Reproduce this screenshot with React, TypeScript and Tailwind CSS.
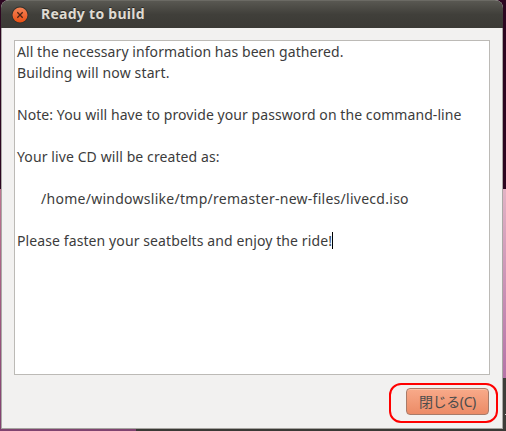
import { clsx } from 'clsx'

interface Line {
  text: string
  className?: string
}

const lines: Line[] = [
  { text: 'All the necessary information has been gathered.', className: 'tracking-[0.07px]' },
  { text: 'Building will now start.', className: 'tracking-[0.14px]' },
  { text: '' },
  { text: 'Note: You will have to provide your password on the command-line', className: 'tracking-[0.07px]' },
  { text: '' },
  { text: 'Your live CD will be created as:', className: 'tracking-[0.1px]' },
  { text: '' },
  { text: '/home/windowslike/tmp/remaster-new-files/livecd.iso', className: 'pl-6 tracking-[0.27px]' },
  { text: '' },
  { text: 'Please fasten your seatbelts and enjoy the ride!', className: 'tracking-[0.1px]' },
]

function CloseIcon() {
  return (
    <svg width="18" height="18" viewBox="0 0 18 18" className="shrink-0">
      <defs>
        <linearGradient id="close" x1="0" y1="0" x2="0" y2="1">
          <stop offset="0" stopColor="#f58253" />
          <stop offset="0.5" stopColor="#f06a38" />
          <stop offset="1" stopColor="#e94f12" />
        </linearGradient>
      </defs>
      <circle cx="9" cy="9" r="8.4" fill="#33322d" />
      <circle cx="9" cy="9" r="7.5" fill="url(#close)" />
      <path d="M6.3 6.3l5.4 5.4M11.7 6.3l-5.4 5.4" stroke="#4c2415" strokeWidth="1.3" />
    </svg>
  )
}

function TitleBar({ title }: { title: string }) {
  return (
    <div className="flex h-7 shrink-0 items-center gap-3 border-t border-[#6b6a64] bg-linear-to-b from-[#595852] via-[#403f3a] to-[#3b3a35] pl-[10px]">
      <CloseIcon />
      <span className="pb-0.5 text-sm font-bold leading-none tracking-[0.27px] text-[#dfdbd2] [text-shadow:0_-1px_0_#2a2925]">
        {title}
      </span>
    </div>
  )
}

function MessageView() {
  return (
    <div className="h-[335px] border border-[#bcbab6] bg-white pl-0.5 text-sm leading-[21px] text-[#3c3c3c]">
      {lines.map((line, i) => (
        <div key={i} className={clsx('flex h-[21px] items-center whitespace-nowrap', line.className)}>
          <span>{line.text}</span>
          {i === lines.length - 1 && <span className="h-[17px] w-px bg-black" />}
        </div>
      ))}
    </div>
  )
}

function Dialog() {
  return (
    <div className="flex h-[429px] w-[502px] flex-col overflow-hidden rounded-t-lg border-b border-[#a5a39f] bg-[#f2f1f0]">
      <TitleBar title="Ready to build" />
      <div className="flex flex-1 flex-col border-x border-[#aaa8a5] px-3 pt-3">
        <MessageView />
        {/* Highlighted action */}
        <div className="-mr-2 mt-2 flex h-10 w-[109px] items-start self-end rounded-xl border-2 border-[#ff0000] pl-[15px] pt-[3px]">
          <button className="h-[27px] w-[83px] whitespace-nowrap rounded border border-[#a87b69] bg-linear-to-b from-[#f8aa8a] to-[#ec8b66] text-sm leading-none tracking-[-0.4px] text-[#4c4c4c] shadow-[inset_0_1px_0_#fbc1a8]">
            閉じる(C)
          </button>
        </div>
      </div>
    </div>
  )
}

export default function App() {
  return (
    <div className="flex h-[431px] w-[506px] flex-col overflow-hidden bg-[#2c0620] font-['Noto_Sans','Noto_Sans_CJK_JP',sans-serif]">
      <div className="flex h-[429px]">
        <div className="flex w-px flex-col">
          <div className="h-[189px] bg-[#2c0620]" />
          <div className="flex-1 bg-linear-to-b from-[#bd7590] to-[#80406f]" />
        </div>
        <Dialog />
        <div className="flex w-[3px] flex-col">
          <div className="h-[189px] bg-[#2c0620]" />
          <div className="h-[189px] bg-linear-to-b from-[#e3b2c5] to-[#b574a8]" />
          <div className="flex flex-1 flex-col items-end bg-[#3e3d39] pt-9">
            <div className="size-px bg-[#d8d8d6]" />
          </div>
        </div>
      </div>
      <div className="flex h-0.5">
        <div className="w-[136px] bg-[#804470]" />
        <div className="flex-1 bg-[#3a3935]" />
      </div>
    </div>
  )
}
